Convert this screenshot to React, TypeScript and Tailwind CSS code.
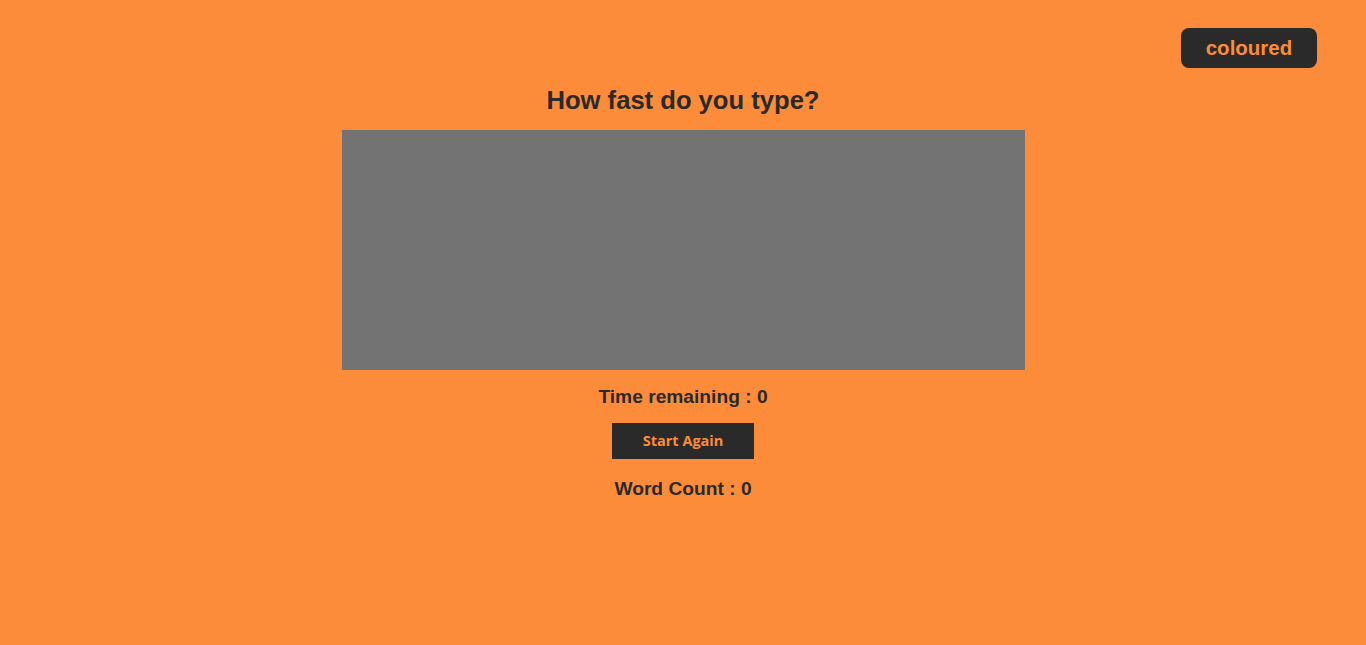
export default function App() {
  return (
    <div className="min-h-screen w-full bg-[#fd8c3a] text-[#2a2a2a]" style={{ fontFamily: '"Liberation Sans", Arial, sans-serif', minHeight: 645 }}>
      <div className="flex justify-end pt-[28px] pr-[49px]">
        <button className="h-[40px] w-[136px] rounded-[8px] bg-[#2a2a2a] text-[#fd8c3a] text-[20.5px] font-bold leading-none">
          coloured
        </button>
      </div>
      <div className="flex flex-col items-center">
        <h1 className="mt-[18px] h-[28px] text-[25.6px] font-bold leading-[28px]">How fast do you type?</h1>
        <textarea className="mt-[16px] h-[240px] w-[683px] resize-none bg-[#737373] outline-none border-0" />
        <div className="mt-[16px] h-[22px] text-[19.2px] font-bold leading-[22px]">Time remaining : 0</div>
        <button className="mt-[15px] h-[36px] w-[142px] bg-[#2a2a2a] text-[#fd8c3a] text-[14.5px] font-bold" style={{ fontFamily: '"Open Sans", sans-serif' }}>
          Start Again
        </button>
        <div className="mt-[19px] h-[22px] text-[19.2px] font-bold leading-[22px]">Word Count : 0</div>
      </div>
    </div>
  );
}
